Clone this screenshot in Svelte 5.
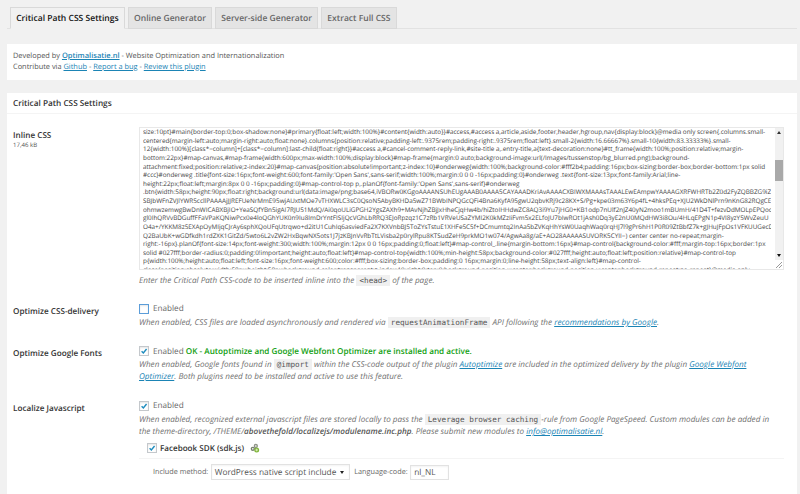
<script>
  const cssLines = [
    "size:10pt}#main{border-top:0;box-shadow:none}#primary{float:left;width:100%}#content{width:auto}}#access,#access a,article,aside,footer,header,hgroup,nav{display:block}@media only screen{.columns.small-",
    "centered{margin-left:auto;margin-right:auto;float:none}.columns{position:relative;padding-left:.9375rem;padding-right:.9375rem;float:left}.small-2{width:16.66667%}.small-10{width:83.33333%}.small-",
    "12{width:100%}[class*=column]+[class*=column]:last-child{float:right}}#access a,#cancel-comment-reply-link,#site-title a,.entry-title,a{text-decoration:none}#tt_frame{width:100%;position:relative;margin-",
    "bottom:22px}#map-canvas,#map-frame{width:600px;max-width:100%;display:block}#map-frame{margin:0 auto;background-image:url(/Images/tussenstop/bg_blurred.png);background-",
    "attachment:fixed;position:relative;z-index:20}#map-canvas{position:absolute!important;z-index:10}#onderweg{width:100%;background-color:#fff2b4;padding:16px;box-sizing:border-box;border-bottom:1px solid",
    "#ccc}#onderweg .title{font-size:16px;font-weight:600;font-family:'Open Sans',sans-serif;width:100%;margin:0 0 0 -16px;padding:0}#onderweg .text{font-size:13px;font-family:Arial;line-",
    "height:22px;float:left;margin:8px 0 0 -16px;padding:0}#map-control-top p,.planOf{font-family:'Open Sans',sans-serif}#onderweg",
    ".btn{width:58px;height:90px;float:right;background:url(data:image/png;base64,iVBORw0KGgoAAAANSUhEUgAAAB0AAAA5CAYAAADKriAvAAAACXBIWXMAAAsTAAALEwEAmpwYAAAAGXRFWHRTb2Z0d2FyZQBBZG9iZ",
    "SBJbWFnZVJlYWR5ccllPAAAAjJJREFUeNrMmE95wjAUxtMOe7vTHXWLC3sC0QsoN5AbyBKHDa5wZ71BWbINPQGcQFi4Bna6KyfA95gwU2qbvKRj9c28KX+S/Pg+kpe03m63Y6p4fL+4hksPEq+XJU2WkDNlPrn9nKnG82RQgCE",
    "ohmwzemwgBwDnWICABXBjIO+YeaSQfYBn5igAI7RJU51MdQ/Ai0qoULiGPGH2YgsZAXh9+MAvNjhZBjJxHheCjqHw4b/hiZtoIHHdwZC8AQ3i9Yu7jHG0+KB1odp7nUlf2nJZ40yN2moo1mBUmH/41D4T+fezvDdMOLpEPQocn",
    "gl0IhQRVvBDGuffFFaVPaKQNiwPcx0e4loQGhYUK0n9Iu8ImDrYntFISIjQcVGhLbRRQ3EJoRpzqz1C7zRb1VRVeUSaZYMI2K0kMZzIiFvm5x2ELfoJU7bIwROt1jAsh0Dq3yE2nU0MQdHW3i8Ou/4HLqEPgN1p4VI8yzY5WvZeuU",
    "O4a+/YKKM8z5EXApOyMIjqCJrAy6sphXQoUFqUtrqwo+d2itU1CuhIq6asviedFa2X7KXVnbBJ5ToZYsTstuE1XHFe5C5f+DCmumtq2InAa5bZVKqHhYsW0UaqhWaq0rqHJ7l9gPr6hH1P0R09ZtBbfZ7k+gJHuJFpOs1VFKUUGecDr",
    "Q2BaUbK+wGDfkdh1rdZXK1GitZd/5wto6L2vZW2HxBqwNX5ots1J7jzKBJnVvRbTtLVisba2p0rylRpu8KTSudZeH9prkMO1w074/AgwAa8g/aE+AO28AAAAASUVORK5CYII=) center center no-repeat;margin-",
    "right:-16px}.planOf{font-size:14px;font-weight:300;width:100%;margin:12px 0 0 16px;padding:0;float:left}#map-control_.line{margin-bottom:16px}#map-control{background-color:#fff;margin-top:16px;border:1px",
    "solid #027fff;border-radius:0;padding:0!important;height:auto;float:left}#map-control-top{width:100%;min-height:58px;background-color:#027fff;height:auto;float:left;position:relative}#map-control-top",
    "p{width:100%;height:auto;float:left;font-size:16px;font-weight:600;color:#fff;box-sizing:border-box;padding:0 16px;margin:0;line-height:58px;text-align:left}#map-control-",
    "close{position:absolute;width:58px;height:58px;background-color:transparent;z-index:10;right:0;top:0;background-position-x:center;background-position-y:center;background-repeat:no-repeat}@media only"
  ];
  const tabs = ["Critical Path CSS Settings", "Online Generator", "Server-side Generator", "Extract Full CSS"];
</script>

<div class="page">
  <nav class="tabs">
    {#each tabs as tab, i}
      <span class="tab" class:active={i === 0}>{tab}</span>
    {/each}
  </nav>

  <section class="card intro">
    <p>Developed by <a href="#x"><b>Optimalisatie.nl</b></a> - Website Optimization and Internationalization</p>
    <p>Contribute via <a href="#x">Github</a> - <a href="#x">Report a bug</a> - <a href="#x">Review this plugin</a></p>
  </section>

  <section class="card main">
    <h2>Critical Path CSS Settings</h2>

    <div class="row row-css">
      <div class="label">Inline CSS<small>17,46 kB</small></div>
      <div class="field">
        <div class="textarea">
          <div class="code">
            {#each cssLines as line}<div class="code-line">{line}</div>{/each}
          </div>
          <div class="scrollbar">
            <span class="arrow up"></span>
            <span class="thumb"></span>
            <span class="arrow down"></span>
          </div>
          <svg class="resizer" viewBox="0 0 8 8" width="8" height="8">
            <path d="M1 7 7 1M4 7 7 4" stroke="#999" stroke-width="1" fill="none" />
          </svg>
        </div>
        <p class="desc">Enter the Critical Path CSS-code to be inserted inline into the <code>&lt;head&gt;</code> of the page.</p>
      </div>
    </div>

    <div class="row row-delivery">
      <div class="label">Optimize CSS-delivery</div>
      <div class="field">
        <div class="check"><span class="box focus"></span>Enabled</div>
        <p class="desc">When enabled, CSS files are loaded asynchronously and rendered via <code>requestAnimationFrame</code> API following the <a href="#x">recommendations by Google</a>.</p>
      </div>
    </div>

    <div class="row row-fonts">
      <div class="label">Optimize Google Fonts</div>
      <div class="field">
        <div class="check tight">
          <span class="box"><svg viewBox="0 0 10 10"><path d="M2 5.2 4.2 7.4 8.2 2.6" /></svg></span>Enabled <strong class="ok">OK - Autoptimize and Google Webfont Optimizer are installed and active.</strong>
        </div>
        <p class="desc">When enabled, Google fonts found in <code>@import</code> within the CSS-code output of the plugin <a href="#x">Autoptimize</a> are included in the optimized delivery by the plugin <a href="#x">Google Webfont<br />Optimizer</a>. Both plugins need to be installed and active to use this feature.</p>
      </div>
    </div>

    <div class="row row-local">
      <div class="label">Localize Javascript</div>
      <div class="field">
        <div class="check local">
          <span class="box"><svg viewBox="0 0 10 10"><path d="M2 5.2 4.2 7.4 8.2 2.6" /></svg></span>Enabled
        </div>
        <p class="desc">When enabled, recognized external javascript files are stored locally to pass the <code>Leverage browser caching</code>-rule from Google PageSpeed. Custom modules can be added in<br />the theme-directory, /THEME/<b>abovethefold/localizejs/modulename.inc.php</b>. Please submit new modules to <a href="#x">info@optimalisatie.nl</a>.</p>

        <div class="module">
          <div class="module-head">
            <span class="box"><svg viewBox="0 0 10 10"><path d="M2 5.2 4.2 7.4 8.2 2.6" /></svg></span>
            <b>Facebook SDK (sdk.js)</b>
            <svg class="plug" viewBox="0 0 12 12" width="10" height="10">
              <circle cx="7" cy="3.6" r="2.6" fill="#8f9488" />
              <circle cx="7" cy="3.6" r="1" fill="#fff" />
              <circle cx="3.4" cy="7" r="2.6" fill="#77806f" />
              <circle cx="3.4" cy="7" r="1" fill="#fff" />
              <circle cx="8" cy="8.4" r="3" fill="#7fb53a" />
              <path d="M6.4 8.4h3.2M8 6.8v3.2" stroke="#e4f2c8" stroke-width="1" />
            </svg>
          </div>
          <div class="module-opts">
            <span>Include method:</span>
            <span class="select">WordPress native script include<i></i></span>
            <span>Language-code:</span>
            <span class="input">nl_NL</span>
          </div>
        </div>
      </div>
    </div>
  </section>
</div>

<style>
  :global(body) {
    margin: 0;
    background: #f1f1f1;
  }
  .page {
    width: 800px;
    height: 494px;
    overflow: hidden;
    box-sizing: border-box;
    padding: 7px 3px 0 7px;
    font-family: "Open Sans", sans-serif;
    font-size: 8.17px;
    color: #555;
    text-rendering: geometricPrecision;
  }
  p { margin: 0; }
  a { color: #1b84b5; }
  .tabs {
    display: flex;
    height: 21px;
    padding-left: 3px;
    gap: 3px;
    border-bottom: 1px solid #e2e2e2;
  }
  .tab {
    box-sizing: border-box;
    height: 22px;
    padding: 0 5.2px;
    display: flex;
    align-items: center;
    background: #e4e4e4;
    border: 1px solid #d9d9d9;
    font-size: 8.55px;
    font-weight: 600;
    color: #666;
    white-space: nowrap;
  }
  .tab.active {
    background: #f1f1f1;
    border-bottom-color: #f1f1f1;
    color: #111;
  }
  .card { background: #fff; }
  .intro {
    margin-top: 15px;
    height: 36px;
    box-sizing: border-box;
    padding: 6.5px 6px 0;
    font-size: 7.4px;
    line-height: 11px;
  }
  .intro b { font-weight: 600; font-size: 7.5px; }
  .main {
    margin-top: 13px;
    height: 420px;
    padding: 0 6px;
  }
  h2 {
    margin: 0 -6px;
    padding: 1px 6px 0;
    height: 19px;
    line-height: 19px;
    font-size: 8.24px;
    font-weight: 600;
    color: #333;
    border-bottom: 1px solid #f4f4f4;
  }
  .row {
    display: grid;
    grid-template-columns: 126px 1fr;
  }
  .row-css { padding-top: 13px; }
  .row-delivery { padding-top: 16px; }
  .row-fonts { padding-top: 16px; }
  .row-local { padding-top: 17px; }
  .label {
    font-size: 8.17px;
    font-weight: 600;
    color: #333;
    padding-top: 3px;
    line-height: 11px;
  }
  .label small {
    display: block;
    font-size: 6.1px;
    font-weight: 400;
    color: #555;
    line-height: 8px;
  }
  .textarea {
    position: relative;
    width: 645px;
    height: 143px;
    box-sizing: border-box;
    border: 1px solid #e8e8e8;
    overflow: hidden;
    padding: 0 12px 0 3px;
  }
  .code {
    font-size: 6.35px;
    line-height: 8.62px;
    color: #444;
  }
  .code-line { white-space: nowrap; overflow: hidden; }
  .scrollbar {
    position: absolute;
    top: 0;
    right: 0;
    bottom: 9px;
    width: 8px;
    background: #f1f1f1;
  }
  .thumb {
    position: absolute;
    top: 32px;
    left: 0;
    right: 0;
    height: 21px;
    background: #a9a9a9;
  }
  .arrow {
    position: absolute;
    left: 2px;
    width: 0;
    height: 0;
    border-left: 2px solid transparent;
    border-right: 2px solid transparent;
  }
  .arrow.up { top: 3px; border-bottom: 3px solid #333; }
  .arrow.down { bottom: 3px; border-top: 3px solid #111; }
  .resizer {
    position: absolute;
    right: 0;
    bottom: 0;
  }
  .desc {
    max-width: 645px;
    font-style: italic;
    font-size: 8.15px;
    line-height: 12.1px;
    color: #707070;
  }
  .textarea + .desc { margin-top: 4.5px; }
  code {
    font-family: "DejaVu Sans Mono", monospace;
    font-size: 7.65px;
    font-style: normal;
    background: #f0f0f0;
    padding: 1px 3px;
    color: #555;
  }
  .check {
    display: flex;
    align-items: center;
    height: 12px;
    white-space: pre;
    margin-bottom: 2.5px;
    color: #666;
  }
  .check.tight { margin-bottom: 1.5px; }
  .check.local { margin-bottom: 2px; }
  .box {
    box-sizing: border-box;
    flex: none;
    display: inline-block;
    width: 10px;
    height: 10px;
    margin-right: 4px;
    border: 1px solid #c4c8cc;
    background: #fff;
    box-shadow: inset 0 1px 2px rgba(0, 0, 0, 0.1);
  }
  .box.focus { border-color: #5b9dd9; }
  .box svg { display: block; width: 100%; height: 100%; }
  .box path {
    fill: none;
    stroke: #1e8cbe;
    stroke-width: 1.8;
  }
  .ok { color: #109e10; font-weight: 600; }
  .desc b { color: #555; font-weight: 600; }
  .module { margin-top: 3px; }
  .module-head {
    display: flex;
    align-items: center;
    height: 14px;
    padding: 0 0 3px 8px;
    border-bottom: 1px solid #f4f4f4;
    color: #333;
    max-width: 637px;
  }
  .module-head .box { margin-right: 3px; }
  .module-head b { font-weight: 600; font-size: 8.08px; }
  .plug { margin-left: 6px; }
  .module-opts {
    display: flex;
    align-items: center;
    gap: 2.5px;
    height: 18px;
    margin-top: 4px;
    padding-left: 14px;
    font-size: 7.27px;
    color: #666;
  }
  .select, .input {
    box-sizing: border-box;
    height: 16px;
    display: flex;
    align-items: center;
    border: 1px solid #e2e2e2;
    background: #fff;
    color: #555;
    font-size: 8.3px;
    box-shadow: inset 0 1px 2px rgba(0, 0, 0, 0.05);
  }
  .select {
    width: 139px;
    padding-left: 3px;
    position: relative;
    margin-right: 2px;
  }
  .select i {
    position: absolute;
    right: 5px;
    top: 6px;
    border-left: 2px solid transparent;
    border-right: 2px solid transparent;
    border-top: 3px solid #222;
  }
  .input {
    width: 39px;
    height: 15px;
    padding-left: 3px;
  }
</style>
